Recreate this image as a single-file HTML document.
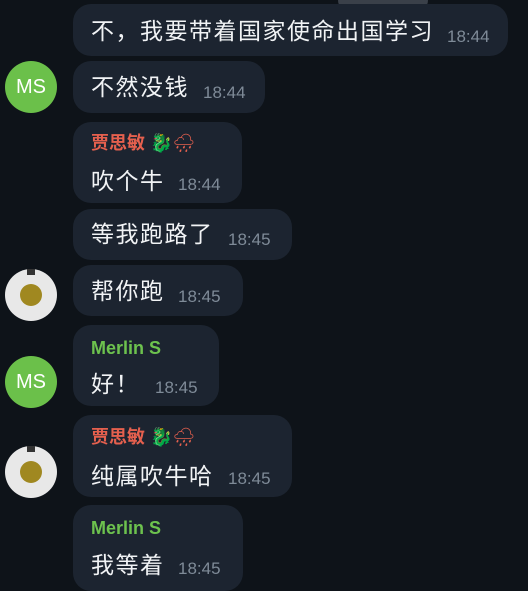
<!DOCTYPE html>
<html><head><meta charset="utf-8"><style>
body{margin:0;width:528px;height:588px;background:#0e1319;overflow:hidden;position:relative;font-family:"Liberation Sans","Noto Sans CJK SC",sans-serif}
.b{position:absolute;left:73px;background:#1c2430;border-radius:18px}
.t{position:absolute;left:18px;color:#f1f3f5;font-size:23px;letter-spacing:1.5px;line-height:26px;white-space:nowrap}
.tm{position:absolute;color:#7f8b98;font-size:17px;line-height:20px}
.n{position:absolute;left:18px;font-size:18px;font-weight:bold;line-height:22px;white-space:nowrap}
.r{color:#e5604e}.g{color:#6dc24e}
.av{position:absolute;left:5px;width:52px;height:52px;border-radius:50%}
.ms{background:#6bc04a;color:#fff;font-size:20px;text-align:center;line-height:52px}
.im{background:#e8e8e8}
.im i{position:absolute;left:15px;top:15px;width:22px;height:22px;border-radius:50%;background:#a08820}
.im b{position:absolute;left:22px;top:0;width:8px;height:6px;background:#333}
.e{font-weight:normal;font-size:18px}
</style></head><body>
<div style="position:absolute;left:338px;top:-12px;width:90px;height:24px;border-radius:12px;background:#3a4049"></div>
<div class="b" style="top:4px;width:435px;height:52px"><div class="t" style="top:14px">不，我要带着国家使命出国学习</div><div class="tm" style="left:374px;top:23px">18:44</div></div>
<div class="av ms" style="top:61px">MS</div>
<div class="b" style="top:61px;width:192px;height:52px"><div class="t" style="top:13px">不然没钱</div><div class="tm" style="left:130px;top:22px">18:44</div></div>
<div class="b" style="top:122px;width:169px;height:81px"><div class="n r" style="top:10px">贾思敏 <span class="e">🐉🌧</span></div><div class="t" style="top:46px">吹个牛</div><div class="tm" style="left:105px;top:53px">18:44</div></div>
<div class="b" style="top:209px;width:219px;height:51px"><div class="t" style="top:12px">等我跑路了</div><div class="tm" style="left:155px;top:21px">18:45</div></div>
<div class="av im" style="top:269px"><b></b><i></i></div>
<div class="b" style="top:265px;width:170px;height:51px"><div class="t" style="top:13px">帮你跑</div><div class="tm" style="left:105px;top:22px">18:45</div></div>
<div class="av ms" style="top:356px">MS</div>
<div class="b" style="top:325px;width:146px;height:81px"><div class="n g" style="top:12px">Merlin S</div><div class="t" style="top:46px">好！</div><div class="tm" style="left:82px;top:53px">18:45</div></div>
<div class="b" style="top:415px;width:219px;height:82px"><div class="n r" style="top:11px">贾思敏 <span class="e">🐉🌧</span></div><div class="t" style="top:48px">纯属吹牛哈</div><div class="tm" style="left:155px;top:54px">18:45</div></div>
<div class="av im" style="top:446px"><b></b><i></i></div>
<div class="b" style="top:505px;width:170px;height:86px"><div class="n g" style="top:12px">Merlin S</div><div class="t" style="top:47px">我等着</div><div class="tm" style="left:105px;top:54px">18:45</div></div>
</body></html>
